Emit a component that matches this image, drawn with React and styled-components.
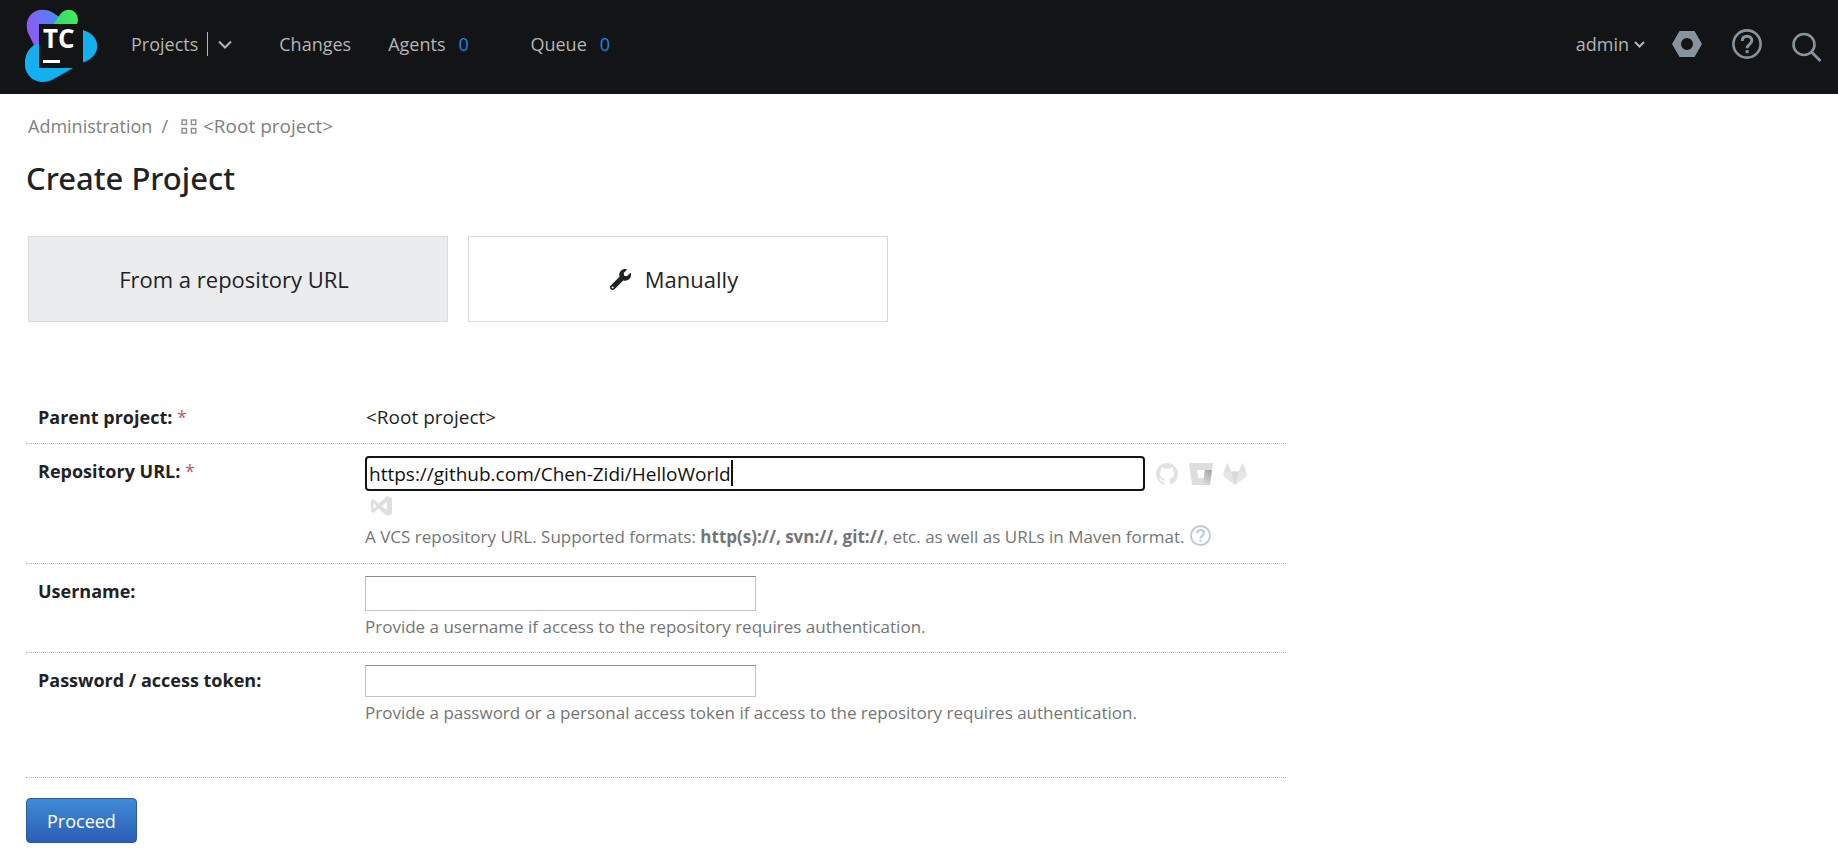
import React, { useEffect, useRef, useState } from 'react';
import styled, { createGlobalStyle } from 'styled-components';
import { FaWrench } from 'react-icons/fa';
import { VscGithubInverted } from 'react-icons/vsc';

const GlobalStyle = createGlobalStyle`
  *, *::before, *::after { box-sizing: border-box; }
  body {
    margin: 0;
    background: #fff;
    color: #1f2326;
    font-family: "Open Sans", "Noto Sans", sans-serif;
    font-size: 18px;
    line-height: 24px;
  }
  a { color: inherit; text-decoration: none; }
  button { font: inherit; color: inherit; cursor: pointer; }
  svg { display: block; flex: none; }
`;

const Header = styled.header`
  display: flex;
  align-items: center;
  justify-content: space-between;
  height: 94px;
  padding: 0 16px 6px 25px;
  background: #121415;
  color: #b4b5b6;
`;

const HeaderStart = styled.div`
  display: flex;
  align-items: center;
  gap: 34px;
`;

const HomeLink = styled.a`
  padding-top: 4px;
`;

const Nav = styled.nav`
  display: flex;
  align-items: center;
  gap: 37px;
`;

const SplitItem = styled.div`
  display: flex;
  align-items: center;
  gap: 9px;
`;

const Divider = styled.span`
  width: 1px;
  height: 24px;
  background: #b4b5b6;
`;

const PlainButton = styled.button`
  display: flex;
  align-items: center;
  gap: 5px;
  padding: 0;
  border: 0;
  background: none;
`;

const MenuToggle = styled(PlainButton)`
  padding: 0 10px 0 1px;
`;

const CounterLink = styled.a`
  display: flex;
  gap: 13px;
`;

const Counter = styled.span`
  width: 35px;
  color: #1a84ec;
`;

const HeaderEnd = styled.div`
  display: flex;
  align-items: center;
  gap: 27px;
`;

const HeaderTools = styled.div`
  display: flex;
  align-items: center;
  gap: 30px;
  color: #87949e;
`;

const Page = styled.main`
  padding: 20px 26px 9px;
`;

const Breadcrumbs = styled.nav`
  display: flex;
  align-items: center;
  gap: 9px;
  padding-left: 2px;
  color: #7e7f81;
`;

const RootCrumb = styled.a`
  display: flex;
  align-items: center;
  gap: 6px;
  padding-left: 4px;
  font-size: 19px;
`;

const Title = styled.h1`
  margin: 20px 0 38px;
  font-family: "Noto Sans", "Open Sans", sans-serif;
  font-size: 31px;
  font-weight: 500;
  line-height: 40px;
`;

const ModeTabs = styled.div`
  display: grid;
  grid-template-columns: repeat(2, 420px);
  gap: 20px;
  padding-left: 2px;
  margin-bottom: 68px;
`;

const ModeTab = styled.button`
  display: flex;
  align-items: center;
  justify-content: center;
  gap: 14px;
  height: 86px;
  padding: 0 18px 0 10px;
  border: 1px solid #d9dadb;
  background: ${(p) => (p.$active ? '#ebeced' : '#fff')};
  font-size: 22px;
`;

const Form = styled.form`
  max-width: 1260px;
`;

const Fields = styled.div`
  padding-bottom: 39px;
  border-bottom: 1px dotted #bcbcbc;
`;

const Row = styled.div`
  display: grid;
  grid-template-columns: 339px 1fr;
  border-bottom: 1px dotted #bcbcbc;

  &:last-child { border-bottom: 0; }
`;

const Label = styled.label`
  padding: 15px 12px 14px;
  font-weight: 700;
`;

const Required = styled.span`
  color: #d2555b;
  font-weight: 400;
`;

const Cell = styled.div`
  padding: 12px 10px 14px 0;
`;

const Value = styled.output`
  padding: 15px 1px 14px;
  font-size: 19px;
`;

const TextInput = styled.input`
  display: block;
  width: 391px;
  max-width: 100%;
  height: ${(p) => (p.type === 'password' ? '32px' : '35px')};
  padding: 0 3px;
  border: 1px solid #c3c4c6;
  border-top-color: #8a8b8d;
  background: #fff;
  color: #111;
  font: inherit;
`;

const UrlField = styled.div`
  position: relative;
  width: 780px;
  max-width: 100%;
  margin-right: 5px;
`;

const UrlInput = styled(TextInput)`
  width: 100%;
  padding: 0 2px;
  border: 2px solid #111314;
  border-radius: 4px;
  font-size: 19px;
  outline: none;
  caret-color: transparent;
`;

const Caret = styled.span`
  position: absolute;
  top: 4px;
  bottom: 5px;
  width: 2px;
  background: #111314;
  pointer-events: none;
`;

const UrlLine = styled.div`
  display: flex;
  flex-wrap: wrap;
  align-items: center;
`;

const VcsButton = styled(PlainButton)`
  justify-content: center;
  width: 34px;
  height: 29px;
  color: #e2e2e2;
`;

const Hint = styled.div`
  display: flex;
  align-items: center;
  gap: 6px;
  margin-top: 5px;
  color: #737577;
  font-size: 17px;
  line-height: 22px;
`;

const HelpLink = styled.a`
  padding-bottom: 3px;
  color: #b9cbdd;
`;

const SubmitButton = styled.button`
  height: 45px;
  margin-top: 20px;
  padding: 0 20px;
  border: 1px solid #2a5aa6;
  border-radius: 4px;
  background: linear-gradient(#3f8bd8, #2b5db4);
  color: #fff;
`;

const Logo = () => (
  <svg width="72" height="74" viewBox="25 9 72 74" role="img" aria-label="TeamCity">
    <defs>
      <linearGradient id="violet" x1="27" y1="30" x2="62" y2="20" gradientUnits="userSpaceOnUse">
        <stop offset="0.1" stopColor="#8a5cf6" />
        <stop offset="1" stopColor="#3f8ef5" />
      </linearGradient>
      <linearGradient id="green" x1="54" y1="24" x2="78" y2="16" gradientUnits="userSpaceOnUse">
        <stop offset="0" stopColor="#35d86a" />
        <stop offset="1" stopColor="#43ee5c" />
      </linearGradient>
    </defs>
    <path fill="url(#violet)" d="M34 45 28.500 34C23 21 31 9.700 42 9.700c5 0 8 1.300 11 3L61 18v8H41v20Z" />
    <path fill="url(#green)" d="M53 24.500 60.500 14c3-4 7-4.500 10-4 5 1 8 6 7.300 11L77 24.500Z" />
    <path fill="#12b0ee" d="M83 30c8 2.500 14.200 8 14.200 16S91 59.500 83 62.500Z" />
    <path fill="#12b0ee" d="M34 45c-6 4-9.200 11-9.200 19 0 10 8 18 18 18 4 0 7-1 10-2.500L74 67.500H39V43Z" />
    <path fill="#121415" d="M39 24h44v44H39z" />
    <text x="43" y="48" fill="#fff" fontFamily="Open Sans, sans-serif" fontSize="26" fontWeight="700">TC</text>
    <path fill="#fff" d="M43 60h17v3H43z" />
  </svg>
);

const Chevron = ({ small }) => (
  <svg
    width={small ? 11 : 14}
    height={small ? 7 : 9}
    viewBox={small ? '0 0 11 7' : '0 0 14 9'}
    fill="none"
    stroke="currentColor"
    strokeWidth="2"
  >
    <path d={small ? 'm1 1 4.500 4.500L10 1' : 'm1 1.500 6 6 6-6'} />
  </svg>
);

const HexIcon = () => (
  <svg width="30" height="28" viewBox="0 0 30 28">
    <path fill="currentColor" fillRule="evenodd" d="M7.500 1h15L30 14l-7.500 13h-15L0 14Zm7.500 7a6 6 0 1 0 0 12 6 6 0 0 0 0-12Z" />
  </svg>
);

const HelpIcon = ({ size }) => (
  <svg width={size} height={size} viewBox="0 0 30 30" fill="none" stroke="currentColor" strokeWidth="2.600">
    <circle cx="15" cy="15" r="13.600" />
    <path strokeWidth="3" d="M10.300 11.900c0-3 2-4.700 4.800-4.700s4.700 1.700 4.700 4.200c0 4-4.700 3.800-4.700 7.900" />
    <path strokeWidth="3" d="M15.100 21.200v3" />
  </svg>
);

const SearchIcon = () => (
  <svg width="30" height="38" viewBox="0 0 30 38" fill="none" stroke="currentColor" strokeWidth="2.600">
    <circle cx="12" cy="19.500" r="10.500" />
    <path d="m19.500 27 9 9" strokeWidth="3" />
  </svg>
);

const RootIcon = () => (
  <svg width="16" height="15" viewBox="0 0 16 15" fill="none" stroke="#8f9092" strokeWidth="1.400">
    <path d="M1 1h4.500v4.500H1zM10.300 1h4.500v4.500h-4.500zM1 9.500h4.500V14H1zM10.300 9.500h4.500V14h-4.500z" />
  </svg>
);

const BitbucketIcon = () => (
  <svg width="24" height="22" viewBox="0 0 24 22">
    <defs>
      <linearGradient id="fold" x1="23" y1="7" x2="12" y2="19" gradientUnits="userSpaceOnUse">
        <stop offset="0.150" stopColor="#a9a9a9" />
        <stop offset="1" stopColor="#dedede" />
      </linearGradient>
    </defs>
    <path fill="#dedede" d="M0 0h24l-3.200 22H3Z" />
    <path fill="#fff" d="M8 7h8l-1.200 8H9.300Z" />
    <path fill="url(#fold)" d="M15.800 7H23l-2.200 15h-9.300l3.300-7Z" />
  </svg>
);

const GitlabIcon = () => (
  <svg width="24" height="22" viewBox="0 0 24 22">
    <path fill="#e6e6e6" d="M4.500 0 0 11.500 1 14l11 8 11-8 1-2.500L19.500 0l-3.700 8.500H8.200Z" />
    <path fill="#d9d9d9" d="M8.200 8.500h7.600L12 22Z" />
    <path fill="#dfdfdf" d="M4.500 0 .8 8.500h7.400zM19.500 0l3.700 8.500h-7.400z" />
  </svg>
);

const VisualStudioIcon = () => (
  <svg width="22" height="20" viewBox="0 0 22 20">
    <path
      fill="#dfdfdf"
      fillRule="evenodd"
      d="m16 0 5 2v16l-5 2-8.500-7.500L2.500 17 0 15.500v-11L2.500 3l5 4.500ZM16 6l-5.500 4 5.500 4ZM2.500 7v6L5.500 10Z"
    />
  </svg>
);

function RepositoryUrlField({ id, initialUrl }) {
  const inputRef = useRef(null);
  const [url, setUrl] = useState(initialUrl);
  const [caretLeft, setCaretLeft] = useState(null);

  const placeCaret = () => {
    const input = inputRef.current;
    const context = document.createElement('canvas').getContext('2d');
    const style = getComputedStyle(input);
    context.font = `${style.fontSize} ${style.fontFamily}`;
    const inset = parseInt(style.borderLeftWidth, 10) + parseInt(style.paddingLeft, 10);
    setCaretLeft(inset + context.measureText(input.value.slice(0, input.selectionStart)).width);
  };

  useEffect(() => {
    const input = inputRef.current;
    input.focus();
    input.setSelectionRange(input.value.length, input.value.length);
    placeCaret();
  }, []);

  return (
    <UrlField>
      <UrlInput
        ref={inputRef}
        id={id}
        type="text"
        spellCheck={false}
        value={url}
        onChange={(e) => setUrl(e.target.value)}
        onSelect={placeCaret}
        onBlur={() => setCaretLeft(null)}
      />
      {caretLeft !== null && <Caret style={{ left: caretLeft }} />}
    </UrlField>
  );
}

export default function App() {
  return (
    <>
      <GlobalStyle />
      <Header>
        <HeaderStart>
          <HomeLink href="#home"><Logo /></HomeLink>
          <Nav aria-label="Main">
            <SplitItem>
              <a href="#projects">Projects</a>
              <Divider />
              <MenuToggle type="button" aria-label="Browse projects"><Chevron /></MenuToggle>
            </SplitItem>
            <a href="#changes">Changes</a>
            <CounterLink href="#agents">Agents <Counter>0</Counter></CounterLink>
            <CounterLink href="#queue">Queue <Counter>0</Counter></CounterLink>
          </Nav>
        </HeaderStart>
        <HeaderEnd>
          <PlainButton type="button">admin <Chevron small /></PlainButton>
          <HeaderTools>
            <PlainButton type="button" aria-label="Administration"><HexIcon /></PlainButton>
            <PlainButton type="button" aria-label="Help"><HelpIcon size={30} /></PlainButton>
            <PlainButton type="button" aria-label="Search"><SearchIcon /></PlainButton>
          </HeaderTools>
        </HeaderEnd>
      </Header>
      <Page>
        <Breadcrumbs aria-label="Breadcrumb">
          <a href="#admin">Administration</a>
          <span>/</span>
          <RootCrumb href="#root"><RootIcon />&lt;Root project&gt;</RootCrumb>
        </Breadcrumbs>
        <Title>Create Project</Title>
        <ModeTabs>
          <ModeTab type="button" $active>From a repository URL</ModeTab>
          <ModeTab type="button"><FaWrench size={21} />Manually</ModeTab>
        </ModeTabs>
        <Form onSubmit={(e) => e.preventDefault()}>
          <Fields>
            <Row>
              <Label htmlFor="parent">Parent project: <Required>*</Required></Label>
              <Value id="parent">&lt;Root project&gt;</Value>
            </Row>
            <Row>
              <Label htmlFor="url">Repository URL: <Required>*</Required></Label>
              <Cell>
                <UrlLine>
                  <RepositoryUrlField id="url" initialUrl="https://github.com/Chen-Zidi/HelloWorld" />
                  <VcsButton type="button" aria-label="GitHub"><VscGithubInverted size={22} /></VcsButton>
                  <VcsButton type="button" aria-label="Bitbucket"><BitbucketIcon /></VcsButton>
                  <VcsButton type="button" aria-label="GitLab"><GitlabIcon /></VcsButton>
                  <VcsButton type="button" aria-label="Azure DevOps"><VisualStudioIcon /></VcsButton>
                </UrlLine>
                <Hint>
                  <span>
                    A VCS repository URL. Supported formats: <b>http(s)://, svn://, git://</b>, etc. as well as URLs
                    in Maven format.
                  </span>
                  <HelpLink href="#help" aria-label="Help"><HelpIcon size={21} /></HelpLink>
                </Hint>
              </Cell>
            </Row>
            <Row>
              <Label htmlFor="username">Username:</Label>
              <Cell>
                <TextInput id="username" type="text" />
                <Hint>Provide a username if access to the repository requires authentication.</Hint>
              </Cell>
            </Row>
            <Row>
              <Label htmlFor="password">Password / access token:</Label>
              <Cell>
                <TextInput id="password" type="password" />
                <Hint>Provide a password or a personal access token if access to the repository requires authentication.</Hint>
              </Cell>
            </Row>
          </Fields>
          <SubmitButton type="submit">Proceed</SubmitButton>
        </Form>
      </Page>
    </>
  );
}
